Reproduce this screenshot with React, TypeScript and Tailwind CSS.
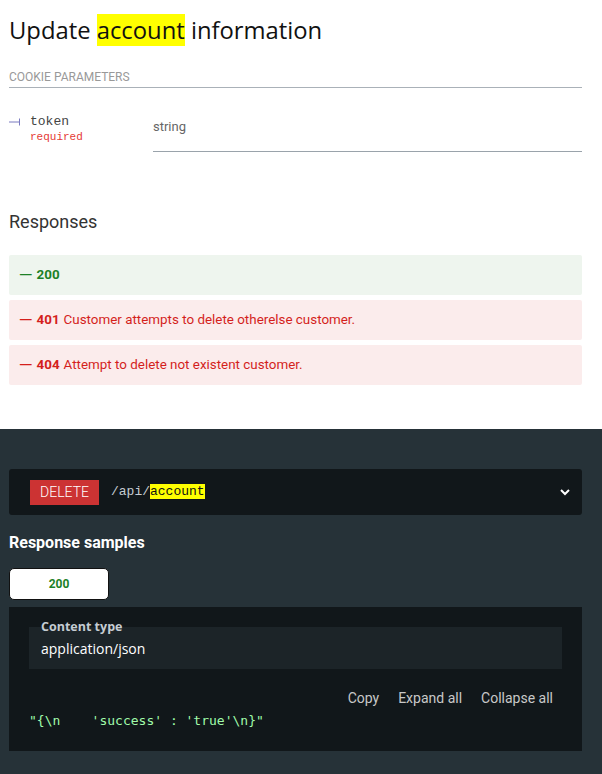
import React from 'react';

const responses = [
  { code: '200', text: '', tone: 'ok' },
  { code: '401', text: 'Customer attempts to delete otherelse customer.', tone: 'err' },
  { code: '404', text: 'Attempt to delete not existent customer.', tone: 'err' },
];

export default function App() {
  return (
    <div className="w-[602px] min-h-[774px] bg-white font-['Roboto',sans-serif]">
      <div className="pl-[9px] pr-[20px] pt-[16px] pb-[44px]">
        <h1 className="font-['Open_Sans',sans-serif] text-[23.8px] leading-[28px] text-[#111]">
          Update <span className="bg-[#ffff00]">account</span> information
        </h1>

        <div className="mt-[26px] text-[12px] leading-[14px] uppercase text-[#999] border-b border-[#aab1b8] pb-[3px]">
          Cookie parameters
        </div>

        <div className="flex mt-[26px]">
          <div className="w-[144px] flex">
            <div className="w-[21px] h-[16px] flex items-center">
              {/* tree connector */}
              <svg width="12" height="8" viewBox="0 0 12 8">
                <path d="M0 4 H10 M10.5 0.5 V7.5" stroke="#7a7ac0" strokeWidth="1" fill="none" />
              </svg>
            </div>
            <div className="flex flex-col">
              <span className="font-['Liberation_Mono',monospace] text-[13px] leading-[16px] text-[#444]">token</span>
              <span className="font-['Liberation_Mono',monospace] text-[11px] leading-[14px] text-[#e53935]">required</span>
            </div>
          </div>
          <div className="flex-1 border-b border-[#9aa3ab] pt-[5px] pb-[16px] text-[13px] leading-[16px] text-[#666]">
            string
          </div>
        </div>

        <h2 className="mt-[58px] text-[18px] leading-[24px] text-[#333]">Responses</h2>

        <div className="mt-[21px] flex flex-col gap-[5px]">
          {responses.map((r) => (
            <div
              key={r.code}
              className={
                r.tone === 'ok'
                  ? 'h-[40px] rounded-[2px] bg-[#eef5ee] text-[#1d8127] flex items-center px-[10px] text-[13.4px]'
                  : 'h-[40px] rounded-[2px] bg-[#fbecec] text-[#d41f1c] flex items-center px-[10px] text-[13.4px]'
              }
            >
              <span className="font-bold">
                <span className="inline-block scale-x-[1.3] origin-left mr-[4px]">—</span> {r.code}
              </span>
              {r.text && <span className="ml-[4px]">{r.text}</span>}
            </div>
          ))}
        </div>
      </div>

      <div className="bg-[#263238] pl-[9px] pr-[20px] pt-[40px] pb-[23px]">
        <div className="h-[46px] bg-[#11171a] rounded-[3px] flex items-center pl-[21px] pr-[10px]">
          <span className="bg-[#cc3333] text-white text-[14px] font-light h-[25px] w-[69px] flex items-center justify-center">
            DELETE
          </span>
          <span className="ml-[12px] font-['Liberation_Mono',monospace] text-[13px] text-[#c5ccd2]">
            /api/<span className="bg-[#ffff00] text-[#111]">account</span>
          </span>
          <svg className="ml-auto mr-[1px]" width="12" height="12" viewBox="0 0 12 12">
            <path d="M2 4 L6 8 L10 4" stroke="white" strokeWidth="2" fill="none" />
          </svg>
        </div>

        <h3 className="mt-[18px] text-[16px] leading-[20px] font-bold text-white">Response samples</h3>

        <div className="mt-[15px] w-[100px] h-[32px] bg-white rounded-[5px] border border-[#111] flex items-center justify-center text-[12px] font-bold text-[#1d8127]">
          200
        </div>

        <div className="mt-[7px] bg-[#11171a] px-[20px] pt-[20px] pb-[22px]">
          <div className="relative bg-[#1c2428] h-[42px] px-[12px] flex items-end pb-[10px]">
            <span className="absolute top-[-9px] left-[12px] font-['Open_Sans',sans-serif] text-[12.5px] font-bold text-[#c5ccd2]">
              Content type
            </span>
            <span className="font-['Open_Sans',sans-serif] text-[14px] text-white">application/json</span>
          </div>
          <div className="mt-[19px] flex justify-end gap-[19px] pr-[9px] text-[14px] text-[#c8c8c8]">
            <span>Copy</span>
            <span>Expand all</span>
            <span>Collapse all</span>
          </div>
          <pre className="mt-[3px] font-['DejaVu_Sans_Mono',monospace] text-[13px] leading-[17px] text-[#a0fbaa]">
            {`"{\\n    'success' : 'true'\\n}"`}
          </pre>
        </div>
      </div>
    </div>
  );
}
